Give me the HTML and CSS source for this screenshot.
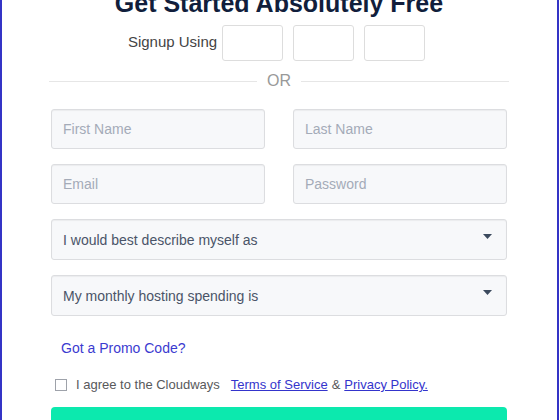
FILE: index.html
```html
<!DOCTYPE html>
<html>
<head>
<title>Cloudways - Signup</title>
<link rel="stylesheet" href="styles.css">
</head>
<body>
<div class="page">
<h1 class="title">Get Started Absolutely Free</h1>
<div class="social">
<span class="social-label">Signup Using</span>
<span class="social-btn"></span>
<span class="social-btn"></span>
<span class="social-btn"></span>
</div>
<div class="or-row">
<span class="or-line"></span>
<span class="or-text">OR</span>
<span class="or-line"></span>
</div>
<form class="signup">
<div class="pair">
<input class="field" type="text" placeholder="First Name">
<input class="field" type="text" placeholder="Last Name">
</div>
<div class="pair">
<input class="field" type="email" placeholder="Email">
<input class="field" type="password" placeholder="Password">
</div>
<div class="select">
<span>I would best describe myself as</span>
<svg class="caret" width="9" height="5" viewBox="0 0 9 5"><path d="M0 0h9L4.5 5z" fill="#3c4a5e"/></svg>
</div>
<div class="select">
<span>My monthly hosting spending is</span>
<svg class="caret" width="9" height="5" viewBox="0 0 9 5"><path d="M0 0h9L4.5 5z" fill="#3c4a5e"/></svg>
</div>
<a class="promo" href="#">Got a Promo Code?</a>
<div class="agree">
<span class="check"></span>
<span>I agree to the Cloudways</span>
<a class="terms" href="#">Terms of Service</a>
<span>&amp;</span>
<a href="#">Privacy Policy.</a>
</div>
<div class="submit"></div>
</form>
</div>
</body>
</html>
```

FILE: styles.css
```css
body {
  margin: 0;
  background: #ffffff;
  font-family: "Liberation Sans", Arial, sans-serif;
}
.page {
  width: 559px;
  height: 420px;
  box-sizing: border-box;
  border-left: 2px solid #3434c6;
  border-right: 2px solid #3434c6;
  padding: 0 48px 0 47px;
  overflow: hidden;
}
.title {
  margin: -9px 0 0;
  font-size: 25px;
  line-height: 25px;
  font-weight: bold;
  color: #111e3c;
  text-align: center;
}
.social {
  display: flex;
  justify-content: center;
  align-items: center;
  gap: 5px;
  margin-top: 9px;
}
.social-label {
  font-size: 15px;
  color: #444444;
  margin-top: -4px;
}
.social-btn {
  width: 61px;
  height: 36px;
  box-sizing: border-box;
  border: 1px solid #dddddd;
  border-radius: 3px;
  margin-right: 5px;
}
.or-row {
  display: flex;
  align-items: center;
  gap: 10px;
  height: 20px;
  margin-top: 10px;
}
.or-line {
  flex: 1;
  height: 1px;
  background: #e6e6e6;
}
.or-text {
  font-size: 16px;
  color: #999999;
}
.signup {
  display: flex;
  flex-direction: column;
  gap: 15px;
  margin: 18px 0 0;
  padding: 0 2px;
}
.pair {
  display: flex;
  gap: 28px;
}
.field {
  flex: 1;
  min-width: 0;
  height: 40px;
  box-sizing: border-box;
  margin: 0;
  padding: 0 11px;
  border: 1px solid #dcdde0;
  border-radius: 3px;
  background: #f7f8fa;
  box-shadow: inset 0 1px 1px rgba(0, 0, 0, 0.05);
  font-family: "Liberation Sans", Arial, sans-serif;
  font-size: 14px;
  color: #4a5468;
}
.field::placeholder {
  color: #a4abb8;
}
.select {
  display: flex;
  justify-content: space-between;
  align-items: center;
  height: 41px;
  box-sizing: border-box;
  padding: 0 14px 0 11px;
  border: 1px solid #dcdde0;
  border-radius: 3px;
  background: #f7f8fa;
  box-shadow: inset 0 1px 1px rgba(0, 0, 0, 0.05);
  font-size: 14px;
  color: #4a5468;
}
.caret {
  margin-top: -6px;
}
.promo {
  align-self: flex-start;
  margin: 7px 0 0 10px;
  font-size: 14px;
  line-height: 20px;
  color: #3b3bd0;
  text-decoration: none;
}
.agree {
  display: flex;
  align-items: center;
  gap: 4px;
  margin-top: 2px;
  padding-left: 4px;
  font-size: 13px;
  line-height: 20px;
  color: #58595b;
}
.agree a {
  color: #3434cc;
  text-decoration: underline;
}
.check {
  width: 12px;
  height: 12px;
  box-sizing: border-box;
  border: 1px solid #9ea2aa;
  margin-right: 5px;
}
.terms {
  margin-left: 7px;
}
.submit {
  height: 50px;
  margin-top: -3px;
  border-radius: 4px;
  background: #0ce9ae;
}
```
